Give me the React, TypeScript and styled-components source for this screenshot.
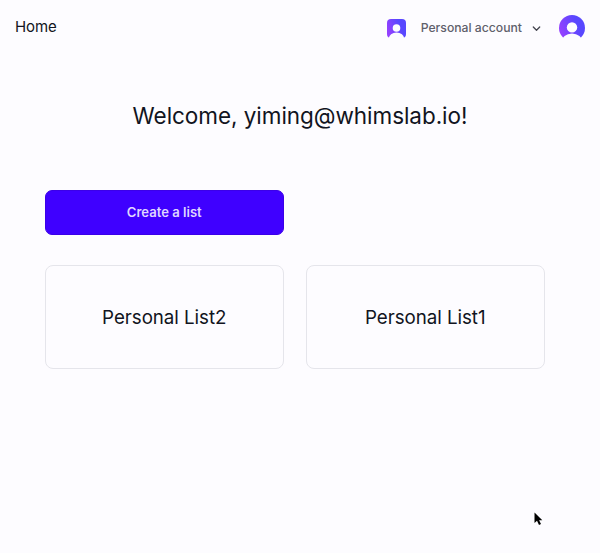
import React from "react";
import styled, { createGlobalStyle } from "styled-components";

const GlobalStyle = createGlobalStyle`
  * { box-sizing: border-box; }
  body {
    margin: 0;
    background: #fdfcff;
    color: #111421;
    font-family: Inter, "Liberation Sans", sans-serif;
  }
`;

const Page = styled.div`
  position: relative;
  height: 553px;
  overflow: hidden;
`;

const Header = styled.header`
  display: flex;
  align-items: center;
  justify-content: space-between;
  height: 56px;
  padding: 0 15px;
`;

const HomeLink = styled.a`
  font-size: 15px;
  line-height: 22px;
  letter-spacing: -0.1px;
  padding-bottom: 3px;
`;

const Account = styled.div`
  display: flex;
  align-items: center;
`;

const Switcher = styled.button`
  display: flex;
  align-items: center;
  padding: 0;
  margin-right: 18px;
  border: 0;
  background: none;
  color: #5f606b;
  font: 500 12.19px/18px Inter, "Liberation Sans", sans-serif;
`;

const SwitcherLabel = styled.span`
  margin: 0 10px 0 15px;
`;

const Main = styled.main`
  padding: 45px 55px 0 45px;
`;

const Title = styled.h1`
  margin: 0 -45px 59px -35px;
  font-size: 22.5px;
  font-weight: 400;
  line-height: 30px;
  letter-spacing: -0.05px;
  text-align: center;
`;

const Grid = styled.div`
  display: grid;
  grid-template-columns: 238.5px 238.5px;
  column-gap: 22.5px;
  row-gap: 30px;
`;

const CreateButton = styled.button`
  grid-column: 1;
  height: 45px;
  padding: 0 0 2px;
  border: 1px solid #3b00e8;
  border-radius: 7px;
  background: #3f00ff;
  color: #dfd6ff;
  font: 600 13.1px/20px Inter, "Liberation Sans", sans-serif;
`;

const Card = styled.article<{ $newRow?: boolean }>`
  grid-column: ${(p) => (p.$newRow ? 1 : "auto")};
  display: flex;
  align-items: center;
  justify-content: center;
  height: 104.4px;
  padding-top: 1px;
  border: 1px solid #e5e5eb;
  border-radius: 8px;
  font-size: 18.75px;
  line-height: 26px;
  letter-spacing: -0.05px;
`;

const Pointer = styled.svg`
  position: absolute;
  left: 533px;
  top: 511px;
`;

function Avatar({ id, size, radius }: { id: string; size: number; radius: number }) {
  return (
    <svg width={size} height={size} viewBox="0 0 26 26">
      <defs>
        <linearGradient id={id} x1="0" y1="0.75" x2="1" y2="0.35">
          <stop offset="0.1" stopColor="#9340ff" />
          <stop offset="0.75" stopColor="#5847ff" />
        </linearGradient>
        <clipPath id={`${id}-clip`}>
          <rect width="26" height="26" rx={radius} />
        </clipPath>
      </defs>
      <g clipPath={`url(#${id}-clip)`}>
        <rect width="26" height="26" fill={`url(#${id})`} />
      </g>
      <circle cx="13" cy="12.4" r="5.2" fill="#fdfcff" />
      <ellipse cx="13" cy="27" rx="10.5" ry="8.6" fill="#fdfcff" />
    </svg>
  );
}

export default function App() {
  return (
    <>
      <GlobalStyle />
      <Page>
        <Header>
          <HomeLink>Home</HomeLink>
          <Account>
            <Switcher>
              <Avatar id="workspace" size={19} radius={5.5} />
              <SwitcherLabel>Personal account</SwitcherLabel>
              <svg width="9" height="9" viewBox="0 0 9 9" fill="none" stroke="#44454f" strokeWidth="1.3" strokeLinecap="round" strokeLinejoin="round">
                <path d="M1.3 3 4.5 6.2 7.7 3" />
              </svg>
            </Switcher>
            <Avatar id="user" size={26} radius={13} />
          </Account>
        </Header>
        <Main>
          <Title>Welcome, yiming@whimslab.io!</Title>
          <Grid>
            <CreateButton>Create a list</CreateButton>
            <Card $newRow>Personal List2</Card>
            <Card>Personal List1</Card>
          </Grid>
        </Main>
        <Pointer width="12" height="16" viewBox="0 0 12 16">
          <path d="M1.5 1.5V12L4 9.8 6 14 8 13 6.1 9.3H9.3Z" fill="#000" stroke="#fff" strokeWidth="1" paintOrder="stroke" />
        </Pointer>
      </Page>
    </>
  );
}
